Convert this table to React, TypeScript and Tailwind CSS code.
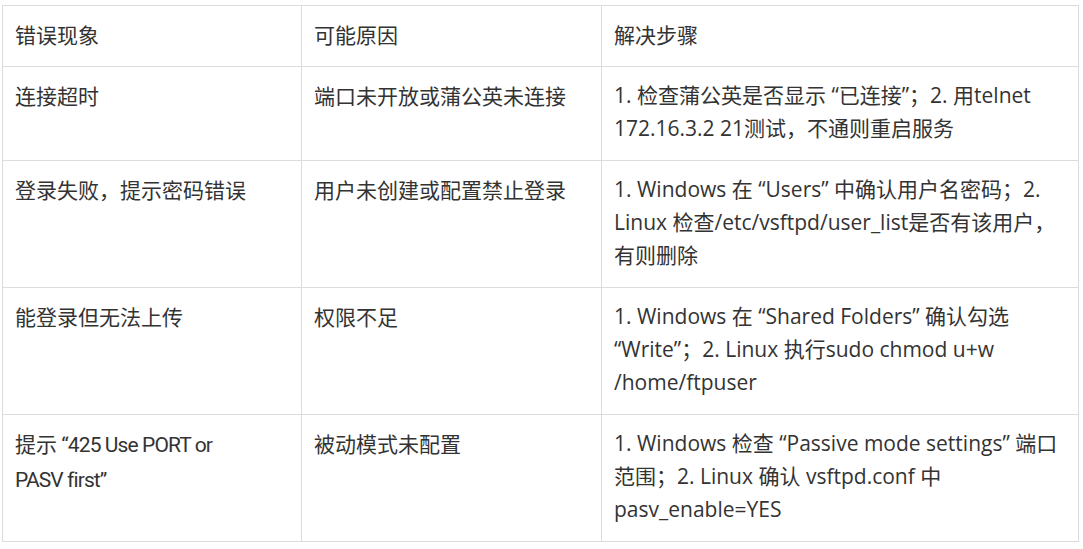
import React from "react";

type Row = { a: React.ReactNode; b: React.ReactNode; c: React.ReactNode };

const latin1 = "font-['Roboto',sans-serif] tracking-[-0.9px]";

const rows: Row[] = [
  {
    a: "连接超时",
    b: "端口未开放或蒲公英未连接",
    c: (
      <>
        1. 检查蒲公英是否显示 “已连接”；2. 用telnet
        <br />
        172.16.3.2 21测试，不通则重启服务
      </>
    ),
  },
  {
    a: "登录失败，提示密码错误",
    b: "用户未创建或配置禁止登录",
    c: (
      <>
        1. Windows 在 “Users” 中确认用户名密码；2.
        <br />
        Linux 检查/etc/vsftpd/user_list是否有该用户，
        <br />
        有则删除
      </>
    ),
  },
  {
    a: "能登录但无法上传",
    b: "权限不足",
    c: (
      <>
        1. Windows 在 “Shared Folders” 确认勾选
        <br />
        “Write”；2. Linux 执行sudo chmod u+w
        <br />
        /home/ftpuser
      </>
    ),
  },
  {
    a: (
      <>
        提示<span className={latin1}> “425 Use PORT or</span>
        <br />
        <span className={latin1}>PASV first”</span>
      </>
    ),
    b: "被动模式未配置",
    c: (
      <>
        1. Windows 检查 “Passive mode settings” 端口
        <br />
        范围；2. Linux 确认 vsftpd.conf 中
        <br />
        pasv_enable=YES
      </>
    ),
  },
];

const cell =
  "border border-[#dcdcdc] align-top pl-[12px] pr-[8px] pt-[12px] pb-[15px] whitespace-nowrap";
const cjk = " font-['Noto_Sans_CJK_SC','Noto_Sans',sans-serif]";
const mixed = " font-['Open_Sans','Noto_Sans_CJK_SC',sans-serif]";

export default function App() {
  return (
    <div className="min-h-[549px] bg-white pt-[5px] pl-[2px] text-[21px] leading-[33px] text-[#333333]">
      <table className="table-fixed border-collapse w-[1076px]">
        <colgroup>
          <col className="w-[299px]" />
          <col className="w-[300px]" />
          <col className="w-[477px]" />
        </colgroup>
        <thead>
          <tr>
            <th className={cell + cjk + " text-left font-normal"}>错误现象</th>
            <th className={cell + cjk + " text-left font-normal"}>可能原因</th>
            <th className={cell + cjk + " text-left font-normal"}>解决步骤</th>
          </tr>
        </thead>
        <tbody>
          {rows.map((r, i) => (
            <tr key={i}>
              <td className={cell + cjk}>{r.a}</td>
              <td className={cell + cjk}>{r.b}</td>
              <td className={cell + mixed}>{r.c}</td>
            </tr>
          ))}
        </tbody>
      </table>
    </div>
  );
}
